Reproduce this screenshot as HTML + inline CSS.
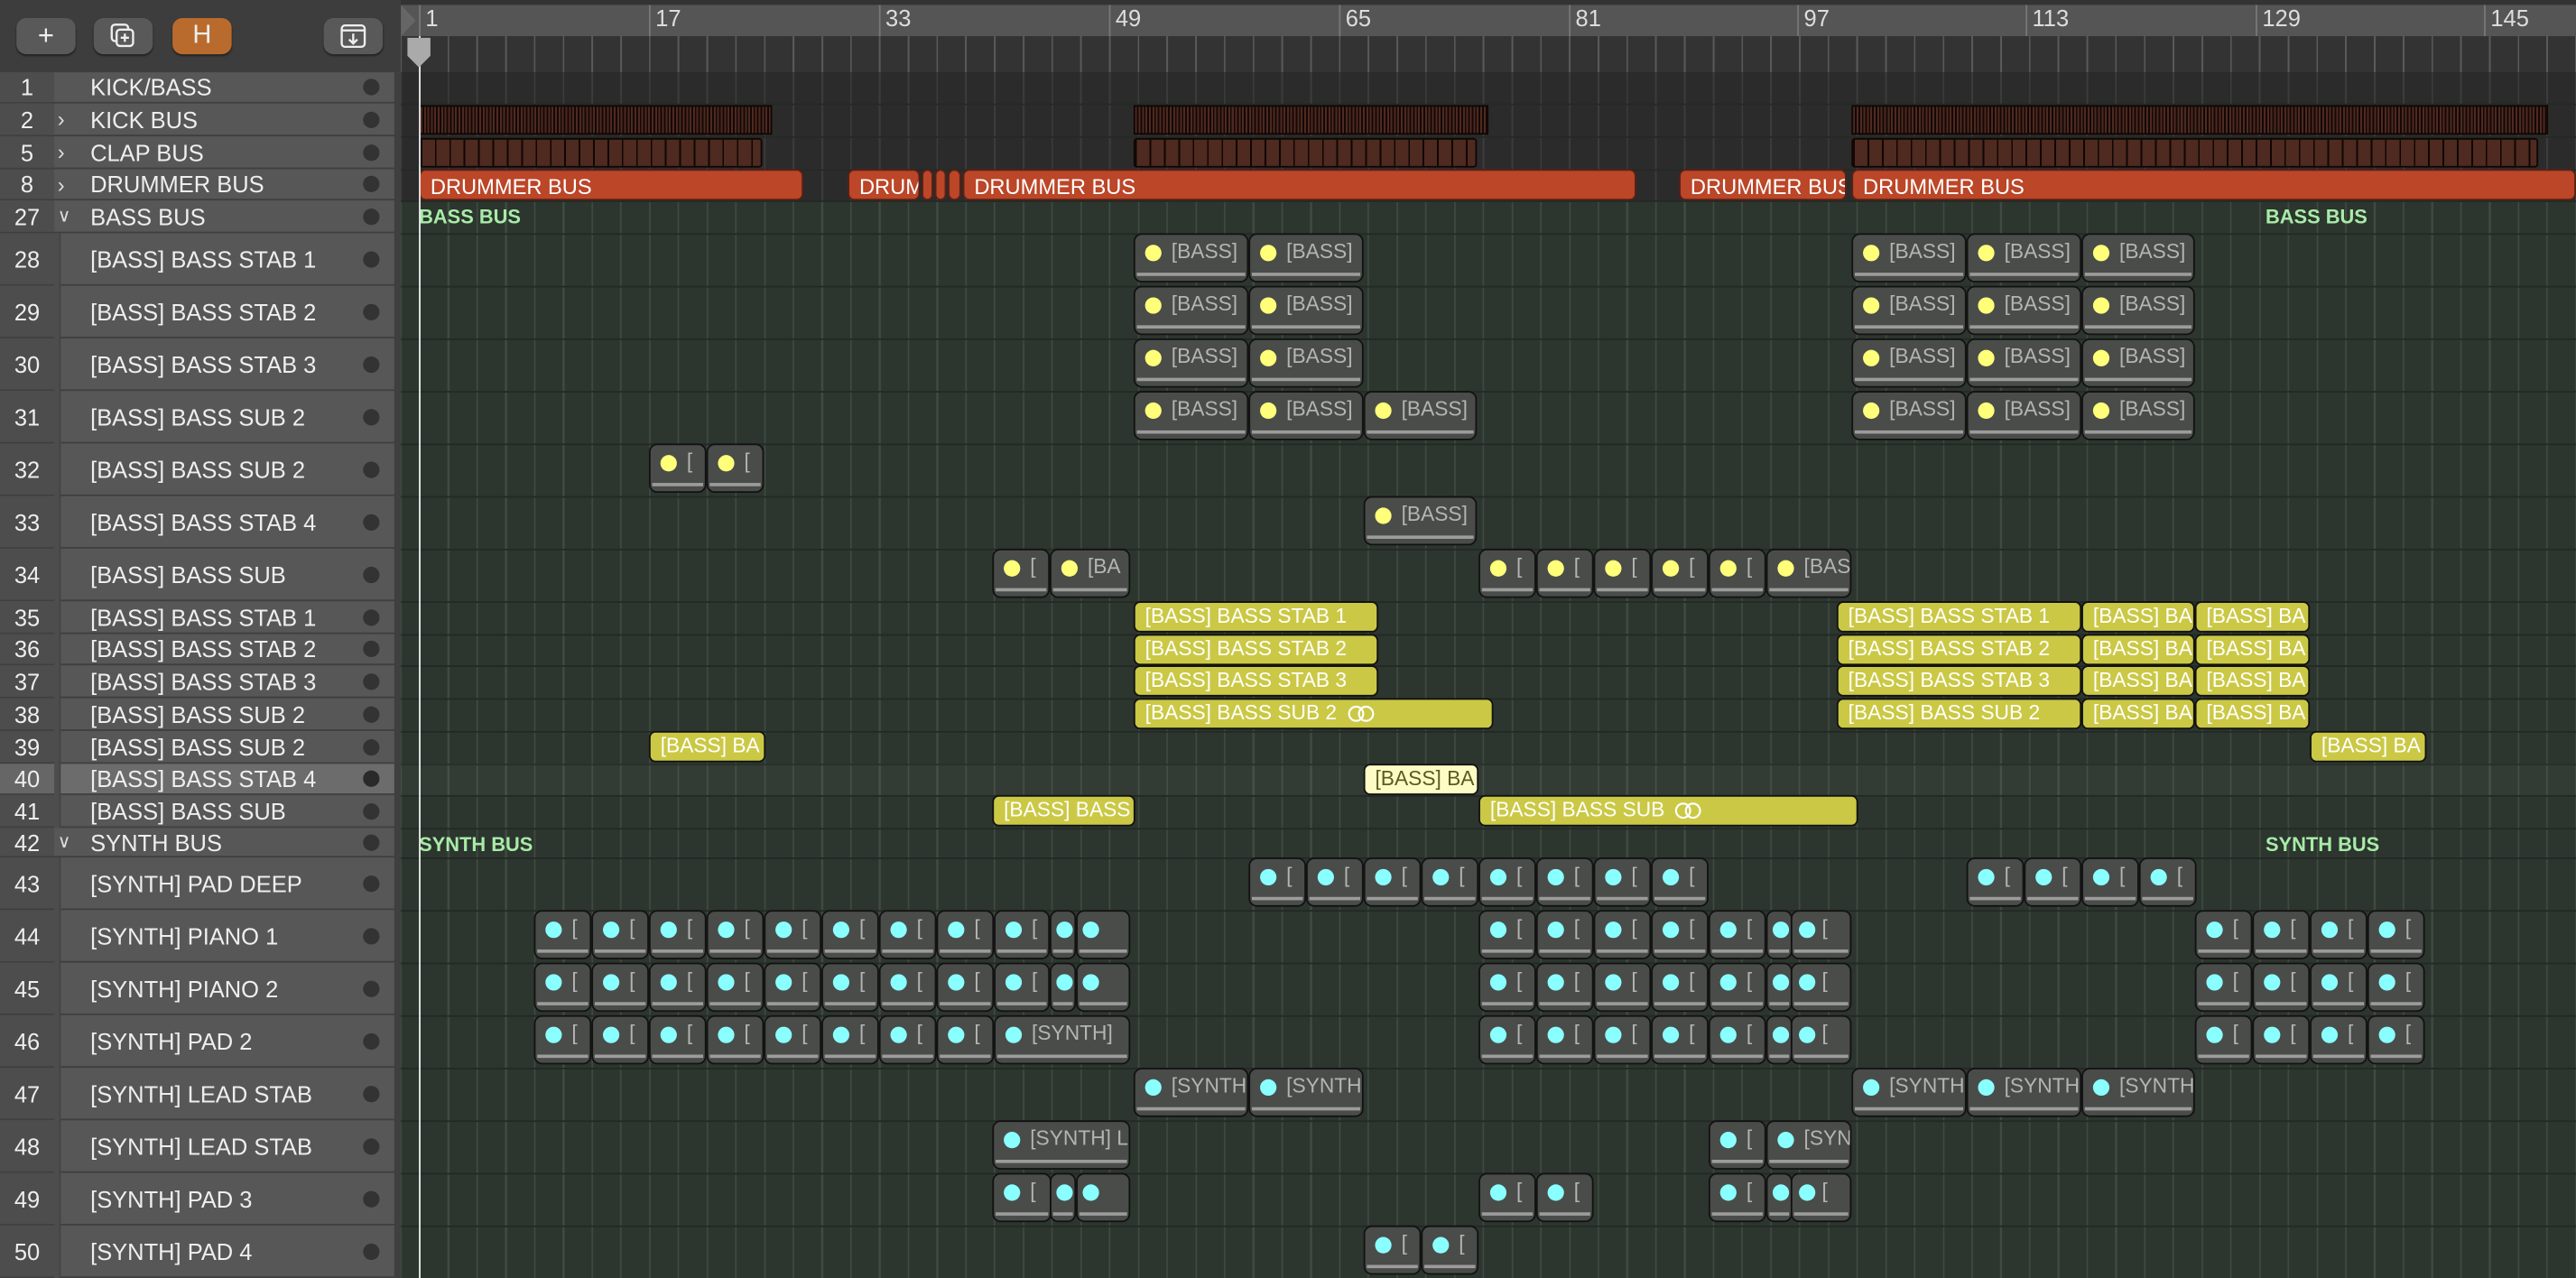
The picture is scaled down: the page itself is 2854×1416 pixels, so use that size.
<!DOCTYPE html>
<html><head><meta charset="utf-8"><style>
html,body{margin:0;padding:0;width:2854px;height:1416px;overflow:hidden;background:#2c352e;font-family:"Liberation Sans",Arial,sans-serif}
#s{position:absolute;left:0;top:0;width:1568px;height:778px;transform:scale(1.82015,1.8201);transform-origin:0 0;overflow:hidden}
.a{position:absolute}
.r{position:absolute;left:0;width:244px;background:#575757;border-bottom:1px solid #3f3f3f;box-sizing:border-box;color:#eee;font-size:14px}
.r .n{position:absolute;left:0;width:33px;text-align:center;background:#4d4d4d;height:100%}
.r .t{position:absolute;left:55px}
.r .d{position:absolute;left:221px;width:10px;height:10px;border-radius:50%;background:#333}
.r .v{position:absolute;left:35px;color:#ddd;font-size:13px}
.btn{position:absolute;top:11px;width:36px;height:22px;border-radius:6px;background:#595959;color:#eee;text-align:center;line-height:22px;font-size:17px;box-shadow:0 1px 1px #222}
.c{position:absolute;height:30px;background:#4a4c49;border:1.5px solid #121212;border-radius:5px;box-sizing:border-box;overflow:hidden;color:#b4b4b4;font-size:12.5px;white-space:nowrap}
.c i{position:absolute;left:6px;top:6px;width:10px;height:10px;border-radius:50%;background:#ffff7a}
.s i{background:#8affff}
.c b{position:absolute;left:22px;top:3px;font-weight:normal}
.c:after{content:'';position:absolute;left:1px;right:1px;bottom:3px;height:2.5px;background:#9c9c9c}
.y{position:absolute;height:19px;background:#cbc845;border:1.5px solid #121212;border-radius:4px;color:#fff;font-size:12.5px;line-height:16px;padding-left:6px;box-sizing:border-box;overflow:hidden;white-space:nowrap}
.y svg{vertical-align:-2px;margin-left:6px}
.dr{position:absolute;top:103px;height:19px;background:#bb4628;border-radius:4px;color:#fff;font-size:13px;line-height:19px;padding-left:6px;box-sizing:border-box;overflow:hidden;white-space:nowrap;border:1px solid #5a2014}
.k{position:absolute;top:64px;height:18px;background:repeating-linear-gradient(90deg,#4e2a20 0 1.1px,#140806 1.1px 2.1px);border:1px solid #100604;box-sizing:border-box}
.cl{position:absolute;top:84px;height:18px;background:repeating-linear-gradient(90deg,#100604 0 1px,#4e2a20 1px 8.75px);border:1px solid #100604;box-sizing:border-box;border-radius:2px}
.g{position:absolute;color:#a8eba8;font-weight:bold;font-size:12px}
.rn{position:absolute;top:3px;color:#ddd;font-size:14px;border-left:1px solid #777;padding-left:3px;height:19px;line-height:17px}
.h{position:absolute;left:244px;width:1324px;height:1px;background:#232a25}
</style></head><body><div id="s">

<div class="a" style="left:0;top:0;width:244px;height:44px;background:#3d3d3d;border-bottom:1px solid #2e2e2e"></div>
<div class="btn" style="left:10px">+</div>
<div class="btn" style="left:57px"><svg width="18" height="16" viewBox="0 0 18 16" style="margin-top:3px"><rect x="2" y="1" width="10" height="10" rx="2" fill="none" stroke="#eee" stroke-width="1.3"/><rect x="5" y="4" width="10" height="10" rx="2" fill="#595959" stroke="#eee" stroke-width="1.3"/><path d="M10 6.5v5M7.5 9h5" stroke="#eee" stroke-width="1.3"/></svg></div>
<div class="btn" style="left:105px;background:#b96b2d;font-size:16px">H</div>
<div class="btn" style="left:197px"><svg width="18" height="16" viewBox="0 0 18 16" style="margin-top:3px"><rect x="2" y="1.5" width="14" height="13" rx="2" fill="none" stroke="#eee" stroke-width="1.3"/><path d="M2 4.5h14M9 6.5v6M6.5 10l2.5 2.5 2.5-2.5" fill="none" stroke="#eee" stroke-width="1.3"/></svg></div>

<div class="a" style="left:244px;top:0;width:1324px;height:44px;background:#333"></div>
<div class="a" style="left:244px;top:3px;width:1324px;height:19px;background:#555"></div>
<div class="a" style="left:244px;top:22px;width:1324px;height:22px;background:repeating-linear-gradient(90deg,#5a5a5a 0 1px,transparent 1px 17.5px);background-position:11px 0"></div>
<div class="rn" style="left:255px">1</div><div class="rn" style="left:395px">17</div><div class="rn" style="left:535px">33</div><div class="rn" style="left:675px">49</div><div class="rn" style="left:815px">65</div><div class="rn" style="left:955px">81</div><div class="rn" style="left:1094px">97</div><div class="rn" style="left:1233px">113</div><div class="rn" style="left:1373px">129</div><div class="rn" style="left:1512px">145</div>

<div class="a" style="left:244px;top:44px;width:1324px;height:78px;background:#2b2b2b"></div>
<div class="a" style="left:244px;top:44px;width:1324px;height:78px;background:repeating-linear-gradient(90deg,#3c3c3c 0 1px,transparent 1px 17.5px);background-position:11px 0"></div>
<div class="a" style="left:244px;top:122px;width:1324px;height:656px;background:#2c352e"></div>
<div class="a" style="left:244px;top:122px;width:1324px;height:656px;background:repeating-linear-gradient(90deg,#3f4b41 0 1px,transparent 1px 17.5px);background-position:11px 0"></div>
<div class="h" style="top:63px"></div><div class="h" style="top:83px"></div><div class="h" style="top:103px"></div><div class="h" style="top:122px"></div><div class="h" style="top:142px"></div><div class="h" style="top:174px"></div><div class="h" style="top:206px"></div><div class="h" style="top:238px"></div><div class="h" style="top:270px"></div><div class="h" style="top:302px"></div><div class="h" style="top:334px"></div><div class="h" style="top:366px"></div><div class="h" style="top:386px"></div><div class="h" style="top:405px"></div><div class="h" style="top:425px"></div><div class="h" style="top:445px"></div><div class="h" style="top:465px"></div><div class="h" style="top:484px"></div><div class="h" style="top:504px"></div><div class="h" style="top:522px"></div><div class="h" style="top:554px"></div><div class="h" style="top:586px"></div><div class="h" style="top:618px"></div><div class="h" style="top:650px"></div><div class="h" style="top:682px"></div><div class="h" style="top:714px"></div><div class="h" style="top:746px"></div>
<div class="a" style="left:244px;top:465px;width:1324px;height:19px;background:rgba(255,255,255,0.03)"></div>

<div class="r" style="top:44px;height:19px;line-height:19px"><div class="n">1</div><div class="t">KICK/BASS</div><div class="d" style="top:4px"></div></div>
<div class="r" style="top:63px;height:20px;line-height:20px"><div class="n">2</div><div class="v">&#8250;</div><div class="t">KICK BUS</div><div class="d" style="top:5px"></div></div>
<div class="r" style="top:83px;height:20px;line-height:20px"><div class="n">5</div><div class="v">&#8250;</div><div class="t">CLAP BUS</div><div class="d" style="top:5px"></div></div>
<div class="r" style="top:103px;height:19px;line-height:19px"><div class="n">8</div><div class="v">&#8250;</div><div class="t">DRUMMER BUS</div><div class="d" style="top:4px"></div></div>
<div class="r" style="top:122px;height:20px;line-height:20px"><div class="n">27</div><div class="v" style="font-size:11px">&#8744;</div><div class="t">BASS BUS</div><div class="d" style="top:5px"></div></div>

<div class="r" style="top:142px;height:32px;line-height:32px"><div class="n">28</div><div class="t">[BASS] BASS STAB 1</div><div class="d" style="top:11px"></div></div>
<div class="r" style="top:174px;height:32px;line-height:32px"><div class="n">29</div><div class="t">[BASS] BASS STAB 2</div><div class="d" style="top:11px"></div></div>
<div class="r" style="top:206px;height:32px;line-height:32px"><div class="n">30</div><div class="t">[BASS] BASS STAB 3</div><div class="d" style="top:11px"></div></div>
<div class="r" style="top:238px;height:32px;line-height:32px"><div class="n">31</div><div class="t">[BASS] BASS SUB 2</div><div class="d" style="top:11px"></div></div>
<div class="r" style="top:270px;height:32px;line-height:32px"><div class="n">32</div><div class="t">[BASS] BASS SUB 2</div><div class="d" style="top:11px"></div></div>
<div class="r" style="top:302px;height:32px;line-height:32px"><div class="n">33</div><div class="t">[BASS] BASS STAB 4</div><div class="d" style="top:11px"></div></div>
<div class="r" style="top:334px;height:32px;line-height:32px"><div class="n">34</div><div class="t">[BASS] BASS SUB</div><div class="d" style="top:11px"></div></div>
<div class="r" style="top:366px;height:20px;line-height:20px"><div class="n">35</div><div class="t">[BASS] BASS STAB 1</div><div class="d" style="top:5px"></div></div>
<div class="r" style="top:386px;height:19px;line-height:19px"><div class="n">36</div><div class="t">[BASS] BASS STAB 2</div><div class="d" style="top:4px"></div></div>
<div class="r" style="top:405px;height:20px;line-height:20px"><div class="n">37</div><div class="t">[BASS] BASS STAB 3</div><div class="d" style="top:5px"></div></div>
<div class="r" style="top:425px;height:20px;line-height:20px"><div class="n">38</div><div class="t">[BASS] BASS SUB 2</div><div class="d" style="top:5px"></div></div>
<div class="r" style="top:445px;height:20px;line-height:20px"><div class="n">39</div><div class="t">[BASS] BASS SUB 2</div><div class="d" style="top:5px"></div></div>
<div class="r" style="top:465px;height:19px;line-height:19px;background:#6c6c6c"><div class="n" style="background:#666">40</div><div class="t">[BASS] BASS STAB 4</div><div class="d" style="top:4px;background:#2a2a2a"></div></div>
<div class="r" style="top:484px;height:20px;line-height:20px"><div class="n">41</div><div class="t">[BASS] BASS SUB</div><div class="d" style="top:5px"></div></div>
<div class="r" style="top:504px;height:18px;line-height:18px"><div class="n">42</div><div class="v" style="font-size:11px">&#8744;</div><div class="t">SYNTH BUS</div><div class="d" style="top:4px"></div></div>
<div class="r" style="top:522px;height:32px;line-height:32px"><div class="n">43</div><div class="t">[SYNTH] PAD DEEP</div><div class="d" style="top:11px"></div></div>
<div class="r" style="top:554px;height:32px;line-height:32px"><div class="n">44</div><div class="t">[SYNTH] PIANO 1</div><div class="d" style="top:11px"></div></div>
<div class="r" style="top:586px;height:32px;line-height:32px"><div class="n">45</div><div class="t">[SYNTH] PIANO 2</div><div class="d" style="top:11px"></div></div>
<div class="r" style="top:618px;height:32px;line-height:32px"><div class="n">46</div><div class="t">[SYNTH] PAD 2</div><div class="d" style="top:11px"></div></div>
<div class="r" style="top:650px;height:32px;line-height:32px"><div class="n">47</div><div class="t">[SYNTH] LEAD STAB</div><div class="d" style="top:11px"></div></div>
<div class="r" style="top:682px;height:32px;line-height:32px"><div class="n">48</div><div class="t">[SYNTH] LEAD STAB</div><div class="d" style="top:11px"></div></div>
<div class="r" style="top:714px;height:32px;line-height:32px"><div class="n">49</div><div class="t">[SYNTH] PAD 3</div><div class="d" style="top:11px"></div></div>
<div class="r" style="top:746px;height:32px;line-height:32px"><div class="n">50</div><div class="t">[SYNTH] PAD 4</div><div class="d" style="top:11px"></div></div>
<div class="a" style="left:33px;top:142px;width:3px;height:362px;background:#4d4d4d"></div>
<div class="a" style="left:33px;top:522px;width:3px;height:256px;background:#4d4d4d"></div>
<div class="a" style="left:36px;top:142px;width:1px;height:362px;background:#444"></div>
<div class="a" style="left:36px;top:522px;width:1px;height:256px;background:#444"></div>
<div class="a" style="left:240px;top:44px;width:4px;height:734px;background:#3f3f3f"></div>

<div class="k" style="left:255px;width:215px"></div><div class="k" style="left:690px;width:216px"></div><div class="k" style="left:1127px;width:424px"></div>
<div class="cl" style="left:255px;width:209px"></div><div class="cl" style="left:690px;width:209px"></div><div class="cl" style="left:1127px;width:418px"></div>
<div class="dr" style="left:255px;width:234px">DRUMMER BUS</div>
<div class="dr" style="left:516px;width:44px">DRUM</div>
<div class="dr" style="left:561px;width:7px;padding:0"></div><div class="dr" style="left:569px;width:7px;padding:0"></div><div class="dr" style="left:577px;width:8px;padding:0"></div>
<div class="dr" style="left:586px;width:410px">DRUMMER BUS</div>
<div class="dr" style="left:1022px;width:102px">DRUMMER BUS</div>
<div class="dr" style="left:1127px;width:441px">DRUMMER BUS</div>

<div class="g" style="left:255px;top:125px">BASS BUS</div><div class="g" style="left:1379px;top:125px">BASS BUS</div>
<div class="g" style="left:255px;top:507px">SYNTH BUS</div><div class="g" style="left:1379px;top:507px">SYNTH BUS</div>

<div class="c" style="left:690px;top:142px;width:70px"><i></i><b>[BASS]</b></div><div class="c" style="left:760px;top:142px;width:70px"><i></i><b>[BASS]</b></div><div class="c" style="left:1127px;top:142px;width:70px"><i></i><b>[BASS]</b></div><div class="c" style="left:1197px;top:142px;width:70px"><i></i><b>[BASS]</b></div><div class="c" style="left:1267px;top:142px;width:69px"><i></i><b>[BASS]</b></div>
<div class="c" style="left:690px;top:174px;width:70px"><i></i><b>[BASS]</b></div><div class="c" style="left:760px;top:174px;width:70px"><i></i><b>[BASS]</b></div><div class="c" style="left:1127px;top:174px;width:70px"><i></i><b>[BASS]</b></div><div class="c" style="left:1197px;top:174px;width:70px"><i></i><b>[BASS]</b></div><div class="c" style="left:1267px;top:174px;width:69px"><i></i><b>[BASS]</b></div>
<div class="c" style="left:690px;top:206px;width:70px"><i></i><b>[BASS]</b></div><div class="c" style="left:760px;top:206px;width:70px"><i></i><b>[BASS]</b></div><div class="c" style="left:1127px;top:206px;width:70px"><i></i><b>[BASS]</b></div><div class="c" style="left:1197px;top:206px;width:70px"><i></i><b>[BASS]</b></div><div class="c" style="left:1267px;top:206px;width:69px"><i></i><b>[BASS]</b></div>
<div class="c" style="left:690px;top:238px;width:70px"><i></i><b>[BASS]</b></div><div class="c" style="left:760px;top:238px;width:70px"><i></i><b>[BASS]</b></div><div class="c" style="left:830px;top:238px;width:69px"><i></i><b>[BASS]</b></div><div class="c" style="left:1127px;top:238px;width:70px"><i></i><b>[BASS]</b></div><div class="c" style="left:1197px;top:238px;width:70px"><i></i><b>[BASS]</b></div><div class="c" style="left:1267px;top:238px;width:69px"><i></i><b>[BASS]</b></div>
<div class="c" style="left:395px;top:270px;width:35px"><i></i><b>[</b></div><div class="c" style="left:430px;top:270px;width:35px"><i></i><b>[</b></div>
<div class="c" style="left:830px;top:302px;width:69px"><i></i><b>[BASS]</b></div>
<div class="c" style="left:604px;top:334px;width:35px"><i></i><b>[</b></div><div class="c" style="left:639px;top:334px;width:49px"><i></i><b>[BA</b></div><div class="c" style="left:900px;top:334px;width:35px"><i></i><b>[</b></div><div class="c" style="left:935px;top:334px;width:35px"><i></i><b>[</b></div><div class="c" style="left:970px;top:334px;width:35px"><i></i><b>[</b></div><div class="c" style="left:1005px;top:334px;width:35px"><i></i><b>[</b></div><div class="c" style="left:1040px;top:334px;width:35px"><i></i><b>[</b></div><div class="c" style="left:1075px;top:334px;width:52px"><i></i><b>[BAS</b></div>

<div class="y" style="left:690px;top:366px;width:149px">[BASS] BASS STAB 1</div><div class="y" style="left:1118px;top:366px;width:149px">[BASS] BASS STAB 1</div><div class="y" style="left:1267px;top:366px;width:69px">[BASS] BA</div><div class="y" style="left:1336px;top:366px;width:70px">[BASS] BA</div>
<div class="y" style="left:690px;top:386px;width:149px">[BASS] BASS STAB 2</div><div class="y" style="left:1118px;top:386px;width:149px">[BASS] BASS STAB 2</div><div class="y" style="left:1267px;top:386px;width:69px">[BASS] BA</div><div class="y" style="left:1336px;top:386px;width:70px">[BASS] BA</div>
<div class="y" style="left:690px;top:405px;width:149px">[BASS] BASS STAB 3</div><div class="y" style="left:1118px;top:405px;width:149px">[BASS] BASS STAB 3</div><div class="y" style="left:1267px;top:405px;width:69px">[BASS] BA</div><div class="y" style="left:1336px;top:405px;width:70px">[BASS] BA</div>
<div class="y" style="left:690px;top:425px;width:219px">[BASS] BASS SUB 2<svg width="17" height="11" viewBox="0 0 17 11"><circle cx="5.5" cy="5.5" r="4.3" fill="none" stroke="#fff" stroke-width="1.2"/><circle cx="11.5" cy="5.5" r="4.3" fill="none" stroke="#fff" stroke-width="1.2"/></svg></div><div class="y" style="left:1118px;top:425px;width:149px">[BASS] BASS SUB 2</div><div class="y" style="left:1267px;top:425px;width:69px">[BASS] BA</div><div class="y" style="left:1336px;top:425px;width:70px">[BASS] BA</div>
<div class="y" style="left:395px;top:445px;width:71px">[BASS] BA</div><div class="y" style="left:1406px;top:445px;width:71px">[BASS] BA</div>
<div class="y" style="left:830px;top:465px;width:70px;background:#fdfcc4;color:#5a5a22">[BASS] BA</div>
<div class="y" style="left:604px;top:484px;width:87px">[BASS] BASS</div><div class="y" style="left:900px;top:484px;width:231px">[BASS] BASS SUB<svg width="17" height="11" viewBox="0 0 17 11"><circle cx="5.5" cy="5.5" r="4.3" fill="none" stroke="#fff" stroke-width="1.2"/><circle cx="11.5" cy="5.5" r="4.3" fill="none" stroke="#fff" stroke-width="1.2"/></svg></div>

<div class="c s" style="left:760px;top:522px;width:35px"><i></i><b>[</b></div><div class="c s" style="left:795px;top:522px;width:35px"><i></i><b>[</b></div><div class="c s" style="left:830px;top:522px;width:35px"><i></i><b>[</b></div><div class="c s" style="left:865px;top:522px;width:35px"><i></i><b>[</b></div><div class="c s" style="left:900px;top:522px;width:35px"><i></i><b>[</b></div><div class="c s" style="left:935px;top:522px;width:35px"><i></i><b>[</b></div><div class="c s" style="left:970px;top:522px;width:35px"><i></i><b>[</b></div><div class="c s" style="left:1005px;top:522px;width:35px"><i></i><b>[</b></div><div class="c s" style="left:1197px;top:522px;width:35px"><i></i><b>[</b></div><div class="c s" style="left:1232px;top:522px;width:35px"><i></i><b>[</b></div><div class="c s" style="left:1267px;top:522px;width:35px"><i></i><b>[</b></div><div class="c s" style="left:1302px;top:522px;width:35px"><i></i><b>[</b></div>

<div class="c s" style="left:325px;top:554px;width:35px"><i></i><b>[</b></div><div class="c s" style="left:360px;top:554px;width:35px"><i></i><b>[</b></div><div class="c s" style="left:395px;top:554px;width:35px"><i></i><b>[</b></div><div class="c s" style="left:430px;top:554px;width:35px"><i></i><b>[</b></div><div class="c s" style="left:465px;top:554px;width:35px"><i></i><b>[</b></div><div class="c s" style="left:500px;top:554px;width:35px"><i></i><b>[</b></div><div class="c s" style="left:535px;top:554px;width:35px"><i></i><b>[</b></div><div class="c s" style="left:570px;top:554px;width:35px"><i></i><b>[</b></div><div class="c s" style="left:605px;top:554px;width:34px"><i></i><b>[</b></div><div class="c s" style="left:639px;top:554px;width:16px"><i style="left:3px"></i></div><div class="c s" style="left:655px;top:554px;width:33px"><i style="left:3px"></i></div>
<div class="c s" style="left:900px;top:554px;width:35px"><i></i><b>[</b></div><div class="c s" style="left:935px;top:554px;width:35px"><i></i><b>[</b></div><div class="c s" style="left:970px;top:554px;width:35px"><i></i><b>[</b></div><div class="c s" style="left:1005px;top:554px;width:35px"><i></i><b>[</b></div><div class="c s" style="left:1040px;top:554px;width:35px"><i></i><b>[</b></div><div class="c s" style="left:1075px;top:554px;width:16px"><i style="left:3px"></i></div><div class="c s" style="left:1090px;top:554px;width:37px"><i style="left:4px"></i><b style="left:18px">[</b></div>
<div class="c s" style="left:1336px;top:554px;width:35px"><i></i><b>[</b></div><div class="c s" style="left:1371px;top:554px;width:35px"><i></i><b>[</b></div><div class="c s" style="left:1406px;top:554px;width:35px"><i></i><b>[</b></div><div class="c s" style="left:1441px;top:554px;width:35px"><i></i><b>[</b></div>

<div class="c s" style="left:325px;top:586px;width:35px"><i></i><b>[</b></div><div class="c s" style="left:360px;top:586px;width:35px"><i></i><b>[</b></div><div class="c s" style="left:395px;top:586px;width:35px"><i></i><b>[</b></div><div class="c s" style="left:430px;top:586px;width:35px"><i></i><b>[</b></div><div class="c s" style="left:465px;top:586px;width:35px"><i></i><b>[</b></div><div class="c s" style="left:500px;top:586px;width:35px"><i></i><b>[</b></div><div class="c s" style="left:535px;top:586px;width:35px"><i></i><b>[</b></div><div class="c s" style="left:570px;top:586px;width:35px"><i></i><b>[</b></div><div class="c s" style="left:605px;top:586px;width:34px"><i></i><b>[</b></div><div class="c s" style="left:639px;top:586px;width:16px"><i style="left:3px"></i></div><div class="c s" style="left:655px;top:586px;width:33px"><i style="left:3px"></i></div>
<div class="c s" style="left:900px;top:586px;width:35px"><i></i><b>[</b></div><div class="c s" style="left:935px;top:586px;width:35px"><i></i><b>[</b></div><div class="c s" style="left:970px;top:586px;width:35px"><i></i><b>[</b></div><div class="c s" style="left:1005px;top:586px;width:35px"><i></i><b>[</b></div><div class="c s" style="left:1040px;top:586px;width:35px"><i></i><b>[</b></div><div class="c s" style="left:1075px;top:586px;width:16px"><i style="left:3px"></i></div><div class="c s" style="left:1090px;top:586px;width:37px"><i style="left:4px"></i><b style="left:18px">[</b></div>
<div class="c s" style="left:1336px;top:586px;width:35px"><i></i><b>[</b></div><div class="c s" style="left:1371px;top:586px;width:35px"><i></i><b>[</b></div><div class="c s" style="left:1406px;top:586px;width:35px"><i></i><b>[</b></div><div class="c s" style="left:1441px;top:586px;width:35px"><i></i><b>[</b></div>

<div class="c s" style="left:325px;top:618px;width:35px"><i></i><b>[</b></div><div class="c s" style="left:360px;top:618px;width:35px"><i></i><b>[</b></div><div class="c s" style="left:395px;top:618px;width:35px"><i></i><b>[</b></div><div class="c s" style="left:430px;top:618px;width:35px"><i></i><b>[</b></div><div class="c s" style="left:465px;top:618px;width:35px"><i></i><b>[</b></div><div class="c s" style="left:500px;top:618px;width:35px"><i></i><b>[</b></div><div class="c s" style="left:535px;top:618px;width:35px"><i></i><b>[</b></div><div class="c s" style="left:570px;top:618px;width:35px"><i></i><b>[</b></div><div class="c s" style="left:605px;top:618px;width:83px"><i></i><b>[SYNTH]</b></div>
<div class="c s" style="left:900px;top:618px;width:35px"><i></i><b>[</b></div><div class="c s" style="left:935px;top:618px;width:35px"><i></i><b>[</b></div><div class="c s" style="left:970px;top:618px;width:35px"><i></i><b>[</b></div><div class="c s" style="left:1005px;top:618px;width:35px"><i></i><b>[</b></div><div class="c s" style="left:1040px;top:618px;width:35px"><i></i><b>[</b></div><div class="c s" style="left:1075px;top:618px;width:16px"><i style="left:3px"></i></div><div class="c s" style="left:1090px;top:618px;width:37px"><i style="left:4px"></i><b style="left:18px">[</b></div>
<div class="c s" style="left:1336px;top:618px;width:35px"><i></i><b>[</b></div><div class="c s" style="left:1371px;top:618px;width:35px"><i></i><b>[</b></div><div class="c s" style="left:1406px;top:618px;width:35px"><i></i><b>[</b></div><div class="c s" style="left:1441px;top:618px;width:35px"><i></i><b>[</b></div>

<div class="c s" style="left:690px;top:650px;width:70px"><i></i><b>[SYNTH</b></div><div class="c s" style="left:760px;top:650px;width:70px"><i></i><b>[SYNTH</b></div><div class="c s" style="left:1127px;top:650px;width:70px"><i></i><b>[SYNTH</b></div><div class="c s" style="left:1197px;top:650px;width:70px"><i></i><b>[SYNTH</b></div><div class="c s" style="left:1267px;top:650px;width:69px"><i></i><b>[SYNTH</b></div>

<div class="c s" style="left:604px;top:682px;width:84px"><i></i><b>[SYNTH] L</b></div><div class="c s" style="left:1040px;top:682px;width:35px"><i></i><b>[</b></div><div class="c s" style="left:1075px;top:682px;width:52px"><i></i><b>[SYN</b></div>

<div class="c s" style="left:604px;top:714px;width:36px"><i></i><b>[</b></div><div class="c s" style="left:639px;top:714px;width:16px"><i style="left:3px"></i></div><div class="c s" style="left:655px;top:714px;width:33px"><i style="left:3px"></i></div><div class="c s" style="left:900px;top:714px;width:35px"><i></i><b>[</b></div><div class="c s" style="left:935px;top:714px;width:35px"><i></i><b>[</b></div><div class="c s" style="left:1040px;top:714px;width:35px"><i></i><b>[</b></div><div class="c s" style="left:1075px;top:714px;width:16px"><i style="left:3px"></i></div><div class="c s" style="left:1090px;top:714px;width:37px"><i style="left:4px"></i><b style="left:18px">[</b></div>

<div class="c s" style="left:830px;top:746px;width:35px"><i></i><b>[</b></div><div class="c s" style="left:865px;top:746px;width:35px"><i></i><b>[</b></div>

<div class="a" style="left:254.5px;top:22px;width:1.2px;height:756px;background:#eee"></div>
<svg class="a" style="left:246px;top:22px" width="18" height="20" viewBox="0 0 18 20"><path d="M2 1h14v11l-7 7-7-7z" fill="#aaa"/></svg>
<svg class="a" style="left:244px;top:3px" width="10" height="19" viewBox="0 0 10 19"><path d="M0 0l9 9.5-9 9.5z" fill="#666"/></svg>
</div></body></html>
